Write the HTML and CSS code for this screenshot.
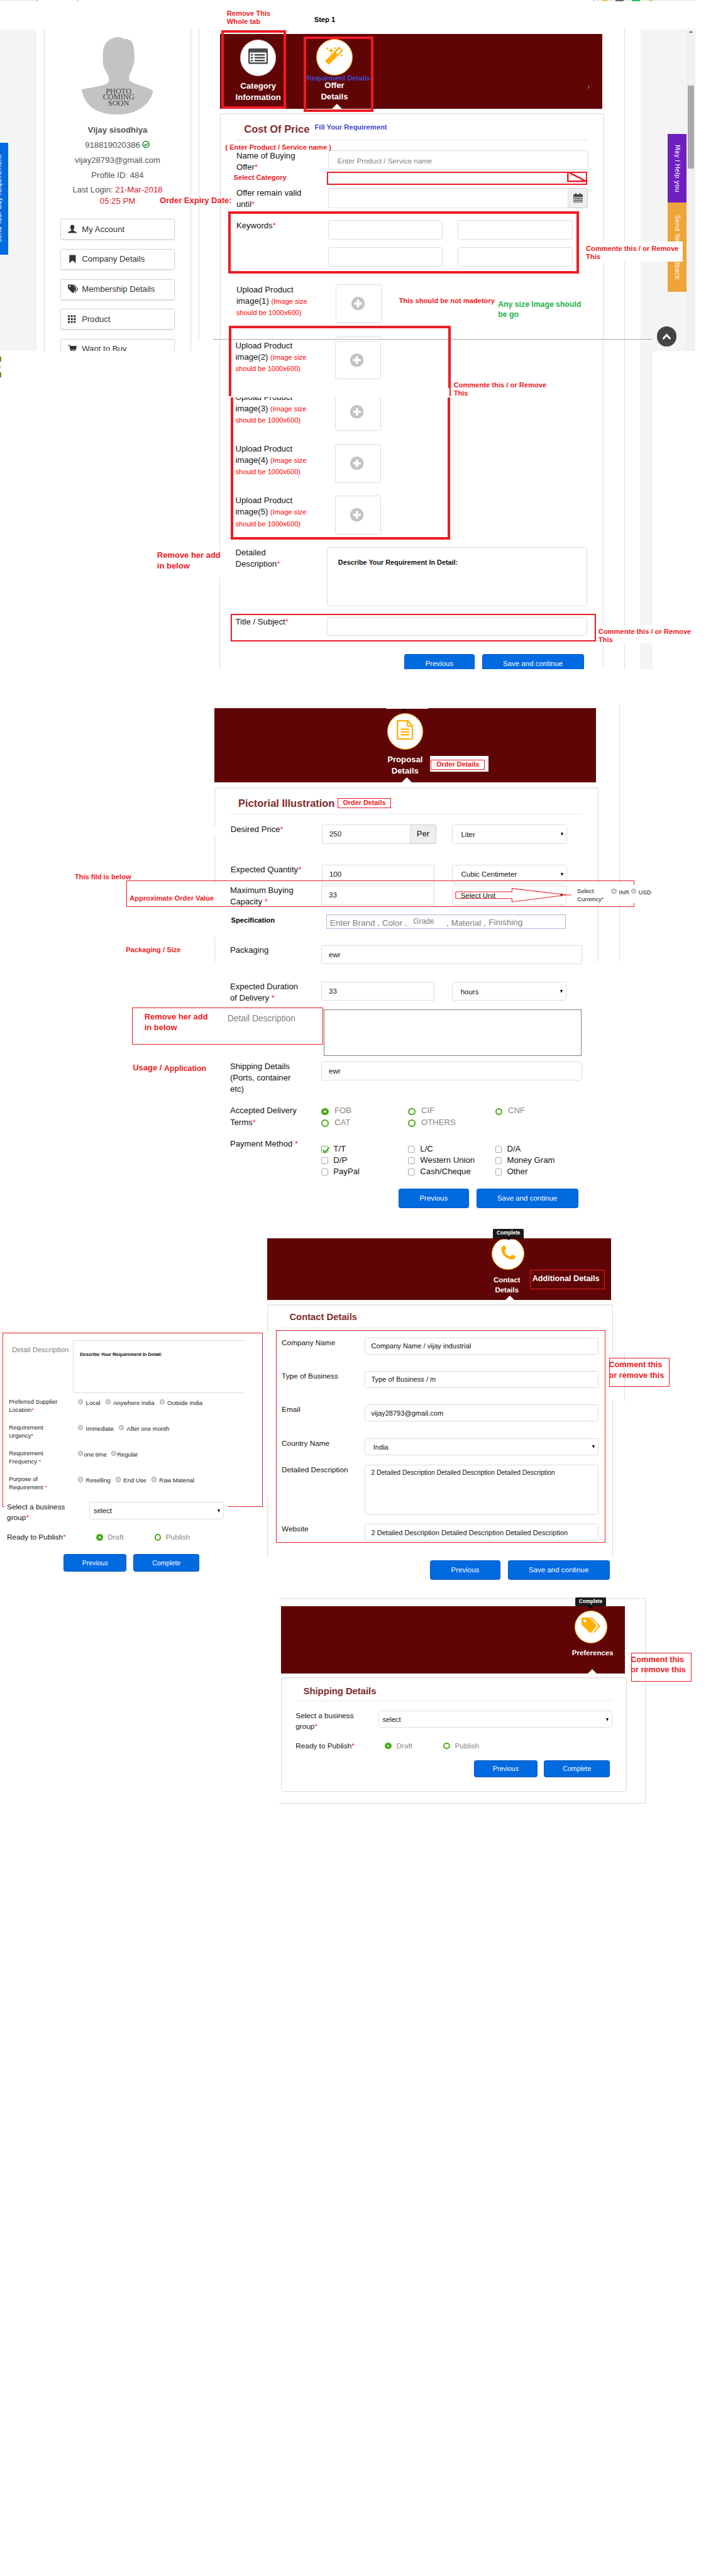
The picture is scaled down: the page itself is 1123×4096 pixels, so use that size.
FILE: index.html
```html
<!DOCTYPE html>
<html lang="en">
<head>
<meta charset="utf-8">
<title>Buying offer form review</title>
<link rel="stylesheet" href="styles.css">
</head>
<body>
<svg width="0" height="0" class="defs">
  <symbol id="i-plus" viewBox="0 0 26 26"><circle cx="13" cy="13" r="13" fill="#c4c2c2"/><path d="M10.8 5.5h4.4v5.3h5.3v4.4h-5.3v5.3h-4.4v-5.3H5.500v-4.400h5.300z" fill="#fff"/></symbol>
  <symbol id="i-tags" viewBox="0 0 36 30"><path d="M2 0h11q2 0 3.500 1.500L28 14q2 2 0 4L19 29q-2 1.500-3.500 0L1.500 15Q0 13.500 0 12V2q0-2 2-2zM6.500 4a2.700 2.700 0 1 0 .1 0z" fill="currentColor" fill-rule="evenodd"/><path d="M16 0h3q1.500 0 3 1.500L35 15q1.500 1.500 0 3.500L25.500 29q-1.500 1.300-3 0l9-11q1.700-2 0-4z" fill="currentColor"/></symbol>
</svg>
<main class="board">

  <!-- browser chrome remains -->
  <div class="strip strip-left"></div>
  <div class="strip strip-right"><i></i><i></i><i></i><i></i></div>
  <div class="tick"></div>

  <!-- first screen -->
  <section class="screen">
    <div class="gutter"></div>
    <aside class="profile">
      <div class="photo">
        <svg viewBox="0 0 138 150"><path d="M71 0C55 0 42 11 41 30v20c1 9 4 12 6 17 4 9 7 10 5 20-6 7-24 9-52 14 3 20 16 49 70 49 44 0 66-28 68-46-10-8-36-12-46-20-1-8 1-14 4-18 3-10 6-14 6-26 0-14-1-24-5-31C90 3 84 2 82 4 79 1 75 0 71 0z" fill="#c3c3c3"/></svg>
        <div class="soon">PHOTO<br>COMING<br>SOON</div>
      </div>
      <p class="name">Vijay sisodhiya</p>
      <p>918819020386 <svg class="ok" viewBox="0 0 16 16"><circle cx="8" cy="8" r="6.700" fill="none" stroke="#1e8e2a" stroke-width="2"/><path d="M4.500 8l2.700 2.800L11.800 6" fill="none" stroke="#1e8e2a" stroke-width="2.200"/></svg></p>
      <p>vijay28793@gmail.com</p>
      <p>Profile ID: 484</p>
      <p>Last Login: <span class="date">21-Mar-2018<br>05:25 PM</span></p>
      <nav class="menu">
        <a><svg viewBox="0 0 18 17"><path d="M9 0c3 0 4.300 2 4.200 5-.1 2.500-1.200 4-2 5v2l6 2.500q.8.500.8 2.500H0q0-2 .8-2.500l6-2.500v-2c-.8-1-1.900-2.500-2-5C4.700 2 6 0 9 0z" fill="#333"/></svg>My Account</a>
        <a><svg viewBox="0 0 18 17"><path d="M3 0h13v17l-6.500-6L3 17z" fill="#333"/></svg>Company Details</a>
        <a><svg class="wide" viewBox="0 0 36 30" color="#333"><use href="#i-tags"/></svg>Membership Details</a>
        <a><svg viewBox="0 0 18 17"><path d="M0 1h4v4H0zM6 1h4v4H6zM12 1h4v4h-4zM0 7h4v4H0zM6 7h4v4H6zM12 7h4v4h-4zM0 13h4v4H0zM6 13h4v4H6zM12 13h4v4h-4z" fill="#333"/></svg>Product</a>
        <a><svg viewBox="0 0 18 17"><path d="M0 0h4l1 2h13l-1.500 8H6.500l.5 1.500h9V13H5.500L3 1.500H0zM6 14h3v3H6zM13 14h3v3h-3z" fill="#333"/></svg>Want to Buy</a>
      </nav>
    </aside>
    <div class="main">
      <header class="steps">
        <div class="step s-cat">
          <span class="disc grey"><svg width="38" height="30" viewBox="0 0 38 30"><path d="M3 0h32q3 0 3 3v24q0 3-3 3H3q-3 0-3-3V3q0-3 3-3zm0 8v19h32V8z" fill="#4b4b4d" fill-rule="evenodd"/><path d="M5 11h4v3H5zm7 0h20v3H12zM5 16.500h4v3H5zm7 0h20v3H12zM5 22h4v3H5zm7 0h20v3H12z" fill="#4b4b4d"/></svg></span>
          Category<br>Information
        </div>
        <div class="step s-offer">
          <span class="disc"><svg width="36" height="36" viewBox="0 0 36 36"><path d="M26.500 1q1-1 2 0l5.500 6q1 1 0 2L8 34.500q-1 1-2 0L1 29q-1-1 0-2zM28 4l-7 7.500 3.500 3.500 7-7z" fill="#ffae00" fill-rule="evenodd"/><path d="M12 2l1.500 4.500L18 8l-4.500 1.500L12 14l-1.500-4.500L6 8l4.500-1.500zM4.500 1l.8 2 2 .8-2 .8-.8 2-.8-2-2-.8 2-.8zM19 .5l.8 2 2 .8-2 .8-.8 2-.8-2-2-.8 2-.8zM32.500 14.500l.8 2 2 .8-2 .8-.8 2-.8-2-2-.8 2-.8z" fill="#ffae00"/></svg></span>
          Offer<br>Details
        </div>
        <i class="point"></i>
      </header>
      <div class="panel">
        <h2>Cost Of Price</h2>
        <hr>
        <div class="row buying"><label>Name of Buying<br>Offer<b>*</b></label><div class="field ph">Enter Product / Service name</div></div>
        <div class="row valid"><label>Offer remain valid<br>until<b>*</b></label><div class="group"><div class="field"></div><div class="addon"><svg width="18" height="19" viewBox="0 0 18 19"><path d="M1 3h16v15H1zM1 7h16M1 10.500h16M1 14.200h16M5 7v11M9 7v11M13 7v11" fill="none" stroke="#444" stroke-width="1.200"/><path d="M0 3h18v4H0zM3.500 0h2.500v4H3.500zM12 0h2.500v4H12z" fill="#444"/></svg></div></div></div>
        <div class="row words"><label>Keywords<b>*</b></label><div class="four"><div class="field"></div><div class="field"></div><div class="field"></div><div class="field"></div></div></div>
        <div class="row up first"><label>Upload Product<br>image(1) <em>(Image size<br>should be 1000x600)</em></label><div class="drop"><svg width="26" height="26"><use href="#i-plus"/></svg></div></div>
        <div class="row up second"><label></label><div class="drop"></div></div>
      </div>
    </div>
    <div class="right-gutter"></div>
    <div class="scroll"><i></i><b></b></div>
  </section>

  <div class="tab blue"><span>Send Your Buy Requirement</span></div>
  <div class="tab purple"><span>May I Help you</span></div>
  <div class="tab orange"><span>Send Your Feedback</span></div>
  <div class="to-top"><svg width="18" height="13" viewBox="0 0 18 13"><path d="M2 11l7-8 7 8" fill="none" stroke="#fff" stroke-width="3.600"/></svg></div>
  <div class="leaf leaf-a"></div><div class="leaf leaf-b"></div><div class="leaf leaf-c"></div>
  <div class="spark"></div>

  <!-- continuation of the first screen -->
  <section class="cont upper">
    <div class="form">
      <div class="row up"><label>Upload Product<br>image(2) <em>(Image size<br>should be 1000x600)</em></label><div class="drop"><svg width="26" height="26"><use href="#i-plus"/></svg></div></div>
    </div>
    <div class="edge"></div><div class="band"></div>
  </section>
  <section class="cont lower">
    <div class="form">
      <div class="row up cut"><label>Upload Product<br>image(3) <em>(Image size<br>should be 1000x600)</em></label><div class="drop"><svg width="26" height="26"><use href="#i-plus"/></svg></div></div>
      <div class="row up"><label>Upload Product<br>image(4) <em>(Image size<br>should be 1000x600)</em></label><div class="drop"><svg width="26" height="26"><use href="#i-plus"/></svg></div></div>
      <div class="row up"><label>Upload Product<br>image(5) <em>(Image size<br>should be 1000x600)</em></label><div class="drop"><svg width="26" height="26"><use href="#i-plus"/></svg></div></div>
      <div class="row detail"><label>Detailed<br>Description<b>*</b></label><div class="field area"><strong>Describe Your Requirement In Detail:</strong></div></div>
      <div class="row subject"><label>Title / Subject<b>*</b></label><div class="field"></div></div>
      <div class="actions"><a class="btn prev">Previous</a><a class="btn save">Save and continue</a></div>
    </div>
    <div class="edge"></div><div class="band"></div>
  </section>

  <div class="box b-cat"></div>
  <div class="box b-offer"></div>
  <div class="box b-select"><svg width="39" height="20" viewBox="0 0 39 20"><path d="M1.500 0v18.500H39M3 1l33 17" fill="none" stroke="#ed1c24" stroke-width="3"/></svg></div>
  <div class="box b-words"></div>
  <div class="box b-img-top"></div>
  <div class="box b-img-mid"></div>
  <div class="box b-img-low"></div>
  <div class="box b-subject"></div>
  <div class="note n-tab">Remove This<br>Whole tab</div>
  <div class="note dark n-step">Step 1</div>
  <div class="note ink n-req">Requirment Details</div>
  <div class="note ink n-fill">Fill Your Requirement</div>
  <div class="note n-enter">( Enter Product / Service name )</div>
  <div class="note n-selcat">Select Category</div>
  <div class="note big n-expiry">Order Expiry Date:</div>
  <div class="note patch n-com1">Commente this / or Remove<br>This</div>
  <div class="note n-mand">This should be not madetory</div>
  <div class="note green n-any">Any size Image should<br>be go</div>
  <div class="note n-com2">Commente this / or Remove<br>This</div>
  <div class="note big patch n-her1">Remove her add<br>in below</div>
  <div class="note patch n-com3">Commente this / or Remove<br>This</div>

  <!-- proposal screen -->
  <section class="proposal">
    <header class="steps">
      <div class="step s-prop">
        <span class="disc"><svg width="32" height="38" viewBox="0 0 32 38"><path d="M1.500 1.500h20l9 9.500v25.500h-29zM21 1.500V11.500h9.500M8 17.500h16M8 23h16M8 28.500h16" fill="none" stroke="#ffae00" stroke-width="2.700"/></svg></span>
        Proposal<br>Details
      </div>
      <i class="point"></i>
    </header>
    <div class="panel">
      <h2>Pictorial Illustration</h2>
      <hr>
      <div class="row price"><label>Desired Price<b>*</b></label><div class="group"><div class="field val short">250</div><div class="addon">Per</div><div class="field sel unit">Liter</div></div></div>
      <div class="row qty"><label>Expected Quantity<b>*</b></label><div class="group"><div class="field val sq num">100</div><div class="field sel">Cubic Centimeter</div></div></div>
      <div class="row cap"><label>Maximum Buying<br>Capacity <b>*</b></label><div class="group"><div class="field val sq num">33</div><div class="field sel">Select Unit</div></div></div>
      <div class="row spec"><label class="note dark">Specification</label><div class="hint"><span>Enter Brand , Color ,</span><span class="grade">Grade</span><span class="mat">, Material ,</span><span class="fin">Finishing</span></div></div>
      <div class="row pack"><label>Packaging</label><div class="field val">ewr</div></div>
      <div class="row dur"><label>Expected Duration<br>of Delivery <b>*</b></label><div class="group"><div class="field val sq num">33</div><div class="field sel">hours</div></div></div>
      <div class="row desc"><label>Detail Description</label><div class="plain"></div></div>
      <div class="row ship"><label>Shipping Details<br>(Ports, container<br>etc)</label><div class="field val">ewr</div></div>
      <div class="row terms"><label>Accepted Delivery<br>Terms<b>*</b></label>
        <div class="opts grey"><span><i class="dot on"></i>FOB</span><span><i class="dot"></i>CIF</span><span><i class="dot"></i>CNF</span><span><i class="dot"></i>CAT</span><span><i class="dot"></i>OTHERS</span></div></div>
      <div class="row pay"><label>Payment Method <b>*</b></label>
        <div class="opts"><span><i class="chk on"><svg width="16" height="16" viewBox="0 0 16 16"><path d="M2 7l4 4.500L14 2" fill="none" stroke="#3fa321" stroke-width="2.600"/></svg></i>T/T</span><span><i class="chk"></i>L/C</span><span><i class="chk"></i>D/A</span><span><i class="chk"></i>D/P</span><span><i class="chk"></i>Western Union</span><span><i class="chk"></i>Money Gram</span><span><i class="chk"></i>PayPal</span><span><i class="chk"></i>Cash/Cheque</span><span><i class="chk"></i>Other</span></div></div>
      <div class="actions"><a class="btn prev">Previous</a><a class="btn save">Save and continue</a></div>
    </div>
  </section>
  <div class="vline v-prop"></div><div class="vline v-cap"></div>
  <div class="blank k1"></div><div class="blank k2"></div>
  <div class="notch"><i></i></div>
  <div class="thin r-cap"></div>
  <div class="currency"><label>Select<br>Currency<b>*</b></label><span><i class="rad"></i>INR</span><span><i class="rad"></i>USD</span></div>
  <svg class="arrow" width="226" height="30" viewBox="0 0 226 30"><path d="M1 8.500h109V2L216 14.500h9M216 14.500L110 28V21.500H1V8.500" fill="none" stroke="#ed1c24" stroke-width="1.300"/></svg>
  <div class="thin r-her"></div>
  <div class="tag tag-head"><span>Order Details</span></div>
  <div class="tag tag-title"><span>Order Details</span></div>
  <div class="note n-fild">This fild is below</div>
  <div class="note n-approx">Approximate Order Value</div>
  <div class="note n-pack">Packaging / Size</div>
  <div class="note big n-her2">Remove her add<br>in below</div>
  <div class="note big n-usage">Usage / <span>Application</span></div>

  <!-- contact screen -->
  <section class="contact">
    <header class="steps">
      <div class="step s-con">
        <span class="disc"><svg width="28" height="28" viewBox="0 0 28 28"><path d="M2 3Q4 0 7 .5q2 1 2.500 6.500 0 2-3 3.500 1 4 4.500 7.500 4 3.500 7.500 4 1.500-3 3.500-3 4 0 5.500 2 1 2-1.500 5-3 2.500-7 1.500C9 25 2 18 .5 9 .3 5 1 4 2 3z" fill="#ffae00"/></svg></span>
        Contact<br>Details
      </div>
      <i class="point"></i>
    </header>
    <div class="panel">
      <h2>Contact Details</h2>
      <hr>
      <div class="row c1"><label>Company Name</label><div class="field val">Company Name / vijay industrial</div></div>
      <div class="row c2"><label>Type of Business</label><div class="field val">Type of Business / m</div></div>
      <div class="row c2"><label>Email</label><div class="field val">vijay28793@gmail.com</div></div>
      <div class="row c2"><label>Country Name</label><div class="field sel">India</div></div>
      <div class="row c3"><label>Detailed Description</label><div class="field val">2 Detailed Description Detailed Description Detailed Description</div></div>
      <div class="row c4"><label>Website</label><div class="field val">2 Detailed Description Detailed Description Detailed Description</div></div>
      <div class="actions"><a class="btn prev">Previous</a><a class="btn save">Save and continue</a></div>
    </div>
  </section>
  <div class="tip t-con">Complete</div>
  <div class="blank k3"></div><div class="blank k4"></div>
  <div class="vline v-con"></div>
  <div class="thin r-con"></div>
  <div class="thin r-com1"></div>
  <div class="thin r-add">Additional Details</div>
  <div class="note big n-comm1">Comment this<br>or remove this</div>

  <!-- additional requirement block -->
  <section class="extra">
    <div class="frame">
      <div class="xdesc"><label>Detail Description</label><div class="field"><strong>Describe Your Requirement In Detail:</strong></div></div>
      <div class="q"><label>Preferred Supplier<br>Location<b>*</b></label><div><span><i class="rad"></i>Local</span><span><i class="rad"></i>Anywhere India</span><span><i class="rad"></i>Outside India</span></div></div>
      <div class="q"><label>Requirement<br>Urgency<b>*</b></label><div><span><i class="rad"></i>Immediate</span><span><i class="rad"></i>After one month</span></div></div>
      <div class="q tight"><label>Requirement<br>Frequency <b>*</b></label><div><span><i class="rad"></i>one time</span><span><i class="rad"></i>Regular</span></div></div>
      <div class="q"><label>Purpose of<br>Requirement <b>*</b></label><div><span><i class="rad"></i>Reselling</span><span><i class="rad"></i>End Use</span><span><i class="rad"></i>Raw Material</span></div></div>
    </div>
    <div class="groupbox">
      <div class="row g1"><label>Select a business<br>group<b>*</b></label><div class="field sel">select</div></div>
      <div class="row g2"><label>Ready to Publish<b>*</b></label><div class="pub"><span><i class="dot on"></i>Draft</span><span><i class="dot"></i>Publish</span></div></div>
      <div class="actions"><a class="btn prev">Previous</a><a class="btn save">Complete</a></div>
    </div>
  </section>

  <!-- preferences screen -->
  <section class="prefs">
    <header class="steps">
      <div class="step s-pref">
        <span class="disc"><svg width="36" height="30" viewBox="0 0 36 30" color="#ffae00"><use href="#i-tags"/></svg></span>
        Preferences
      </div>
      <i class="point"></i>
    </header>
    <div class="panel">
      <h2>Shipping Details</h2>
      <hr>
      <div class="row g1"><label>Select a business<br>group<b>*</b></label><div class="field sel">select</div></div>
      <div class="row g2"><label>Ready to Publish<b>*</b></label><div class="pub"><span><i class="dot on"></i>Draft</span><span><i class="dot"></i>Publish</span></div></div>
      <div class="actions"><a class="btn prev">Previous</a><a class="btn save">Complete</a></div>
    </div>
  </section>
  <div class="tip t-pref">Complete</div>
  <div class="thin r-com2"></div>
  <div class="note big n-comm2">Comment this<br>or remove this</div>
</main>
</body>
</html>
```
FILE: styles.css
```css
* { box-sizing: border-box; }
html, body { margin: 0; padding: 0; background: #fff; overflow: hidden; }
body { height: 4096px; font-family: "Liberation Sans", Arial, sans-serif; }
.defs { position: absolute; }
.board { position: relative; zoom: 0.8219; width: 1366px; height: 4983px; overflow: hidden; font-size: 16px; line-height: 22px; color: #111; }
p, h2, hr { margin: 0; }
svg { display: block; }

/* shared pieces */
.steps { position: relative; background: #600505; height: 144px; }
.step { position: absolute; color: #fff; font-weight: bold; text-align: center; }
.disc { display: flex; align-items: center; justify-content: center; width: 70px; height: 70px; margin: 0 auto 9px; background: #fff; border: 2px solid #ffae00; border-radius: 50%; }
.disc.grey { border-color: #ccc; }
.disc svg { margin-bottom: 6px; }
.point { position: absolute; bottom: 0; border: 10px solid transparent; border-top: 0; border-bottom-color: #fff; }
.panel { border: 1px solid #ddd; border-radius: 4px 4px 0 0; border-bottom: 0; box-shadow: inset 0 1px 2px rgba(0,0,0,.08); }
.panel h2 { font-size: 20px; line-height: 22px; color: #802b2b; margin-left: 15px; white-space: nowrap; }
.panel hr { border: 0; border-top: 1px solid #e9e9e9; height: 1px; }
.row { display: grid; }
.row label b, .currency b, .q b { color: #ed3030; font-weight: normal; }
.row label { margin-top: -1px; white-space: nowrap; height: 0; }
.row em { color: #f00; font-style: normal; font-size: 13.5px; }
.field { border: 1px solid #ddd; border-radius: 4px; background: #fff; height: 37px; font-size: 14px; display: flex; align-items: center; color: #111; white-space: nowrap; }
.field.ph { color: #848484; padding: 4px 0 0 17px; }
.field.val { padding-left: 13px; }
.field.sq { border-radius: 0; }
.field.sel { padding: 1px 6px 0 16px; justify-content: space-between; }
.field.sel::after { content: ""; border: 3.5px solid transparent; border-top: 7px solid #000; border-bottom: 0; }
.group { display: flex; }
.addon { border: 1px solid #ccc; border-left-color: #ddd; border-radius: 0 4px 4px 0; background: #eee; display: flex; align-items: center; justify-content: center; }
.drop { width: 89px; height: 75px; border: 1px solid #ddd; border-radius: 4px; margin-left: 15px; display: flex; align-items: center; justify-content: center; padding-right: 3px; }
.actions { display: flex; gap: 14px; justify-content: flex-end; }
.btn { background: #006ae1; border: 1px solid #0058bc; border-radius: 4px; color: #fff; font-size: 14px; height: 38px; display: flex; align-items: center; justify-content: center; }
.btn.prev { width: 137px; }
.btn.save { width: 197px; }
.dot { width: 14px; height: 14px; border: 3px solid #4caa1c; border-radius: 50%; flex: none; }
.dot.on { border-width: 5.500px; }
.rad { width: 10px; height: 10px; border: 1px solid #999; border-radius: 50%; background: #ddd; flex: none; }

/* red pen */
.note { position: absolute; font-weight: bold; font-size: 13.6px; line-height: 16px; color: #ed1c24; white-space: nowrap; }
.note.dark { color: #000; }
.note.ink { color: #3f48cc; }
.note.big { font-size: 15.8px; line-height: 20px; }
.note.green { color: #22b14c; font-size: 14.9px; line-height: 20px; }
.note.patch { background: #fff; }
.box { position: absolute; border: 5px solid #ed1c24; }
.thin { position: absolute; border: 1px solid #ed1c24; }
.vline { position: absolute; width: 1px; background: #ddd; }
.blank { position: absolute; background: #fff; }

/* chrome remains */
.strip { position: absolute; top: 0; height: 2px; background: #f0f0f0; }
.strip-left { left: 0; width: 73px; border-right: 1px solid #777; }
.strip-right { left: 1149px; width: 197px; border-left: 1px solid #999; display: flex; gap: 16px; padding-left: 15px; }
.strip-right i { width: 16px; height: 2px; background: #666; }
.strip-right i:first-child { width: 10px; background: #e6cf5c; }
.strip-right i:nth-child(3) { background: #24c26c; }
.strip-right i:last-child { width: 8px; background: #b9e27c; }
.tick { position: absolute; left: 150px; top: 0; width: 1px; height: 2px; background: #999; }

/* first screen */
.screen { position: absolute; left: 0; top: 56px; width: 1346px; height: 623px; overflow: hidden; display: flex; }
.gutter { width: 70px; background: #f4f4f4; flex: none; }
.profile { width: 285px; margin-left: 15px; border: 1px solid #d8d8d8; border-width: 0 1px; flex: none; color: #555; text-align: center; }
.photo { position: relative; width: 138px; height: 150px; margin: 16px auto 19px; }
.soon { position: absolute; left: 0; top: 99px; width: 142px; font: 15px/12px "Liberation Serif", serif; color: #444; }
.profile p { margin-bottom: 7px; }
.profile .name { font-weight: bold; }
.profile .date { color: #d2232a; }
.ok { display: inline-block; width: 15px; height: 16px; vertical-align: -1px; }
.menu { padding: 16px 30px 0; }
.menu a { display: flex; align-items: center; height: 40px; margin-bottom: 18px; border: 1px solid #d5d5d5; border-radius: 3px; box-shadow: 0 1px 2px rgba(0,0,0,.12); padding-left: 14px; color: #333; }
.menu svg { width: 17px; height: 17px; margin-right: 10px; margin-bottom: 2px; }
.menu svg.wide { width: 20px; margin-right: 7px; }
.main { width: 825px; margin-left: 15px; border: 1px solid #ddd; border-width: 0 1px; height: 599px; flex: none; padding: 10px 40px 0; overflow: hidden; }
.main .steps { width: 739px; }
.main .panel { width: 743px; height: 440px; margin-top: 9px; padding: 18px 0 0 30px; }
.main hr { width: 681px; margin-top: 10px; }
.main .row, .cont .row { grid-template-columns: 177.5px 503.500px; }
.s-cat { left: 24px; top: 11px; width: 99px; }
.s-offer { left: 171px; top: 10px; width: 100px; }
.s-offer .disc, .s-cat .disc { margin-bottom: 9px; }
.main .point { left: 216px; }
.row.buying { margin-top: 20px; height: 44px; }
.row.valid { margin-top: 28px; height: 39px; }
.valid .field { width: 464px; height: 39px; border-radius: 4px 0 0 4px; border-right: 0; }
.valid .addon { width: 39px; height: 39px; }
.row.words { margin-top: 24px; height: 89px; }
.four { display: grid; grid-template-columns: 222px 222px; gap: 15px 29px; align-content: start; }
.row.first { margin-top: 35px; }
.row.second { margin-top: 25px; }
.right-gutter { width: 89px; background: #f4f4f4; flex: none; margin-left: 30px; }
.scroll { width: 17px; background: #f0f0f0; flex: none; display: flex; flex-direction: column; align-items: center; padding-top: 4px; }
.scroll i { border: 4px solid transparent; border-top: 0; border-bottom: 4px solid #555; }
.scroll b { width: 12px; height: 160px; margin-top: 102px; background: #a8a8a8; }

.tab { position: absolute; writing-mode: vertical-rl; font: 12.400px/15px "DejaVu Sans", Verdana, sans-serif; color: #fff; display: flex; align-items: center; justify-content: center; white-space: nowrap; overflow: hidden; }
.tab.blue { left: 0; top: 276px; width: 16px; height: 217px; background: #006ae1; }
.tab.blue span { transform: rotate(180deg); margin-left: -18px; font-size: 12.200px; }
.tab.purple { left: 1292px; top: 259px; width: 37px; height: 133px; background: #6f1fc0; }
.tab.orange { left: 1292px; top: 392px; width: 37px; height: 172px; background: #eda438; }
.to-top { position: absolute; z-index: 2; left: 1271px; top: 632px; width: 38px; height: 38px; border-radius: 50%; background: #444; display: flex; align-items: center; justify-content: center; }
.leaf { position: absolute; left: 0; width: 2px; background: #6b8e23; }
.leaf-a { top: 690px; height: 9px; }
.leaf-b { top: 709px; height: 1px; }
.leaf-c { top: 720px; height: 10px; }
.spark { position: absolute; left: 1139px; top: 165px; width: 1px; height: 6px; background: #e0912c; }

/* continuation */
.cont { position: absolute; background: #fff; width: 851px; left: 412px; padding-left: 13px; overflow: hidden; display: grid; grid-template-columns: 743px 41px 30px 24px; }
.cont.upper { top: 656px; height: 113px; border-top: 1px solid #aaa; }
.cont.lower { top: 769px; height: 525px; }
.cont .form { border: 1px solid #ddd; border-width: 0 1px; padding: 2px 30px 0 29.5px; height: 700px; }
.cont .edge { border-right: 1px solid #ddd; }
.cont .band { grid-column: 4; background: #f4f4f4; }
.cont .row.up { height: 75px; margin-bottom: 25px; }
.cont .row.cut { margin-top: -12px; }
.cont .field { width: 503.500px; }
.cont .field.area { height: 114px; align-items: flex-start; padding: 20px 0 0 20px; font-size: 13.2px; line-height: 16px; }
.cont .row.subject { margin-top: 20px; height: 37px; }
.cont .actions { margin: 35px 7px 0 0; }

.b-cat { left: 428px; top: 58px; width: 126px; height: 153px; }
.b-offer { left: 588px; top: 71px; width: 135px; height: 146px; }
.b-select { left: 633px; top: 332px; width: 504px; height: 26px; border-width: 3px; background: #fff; display: flex; justify-content: flex-end; }
.b-select svg { margin-top: -2px; margin-right: -2px; }
.b-words { left: 442px; top: 409px; width: 678px; height: 120px; }
.b-img-top { left: 443px; top: 630px; width: 429px; height: 121px; border-bottom: 0; }
.b-img-mid { left: 443px; top: 751px; width: 429px; height: 15px; border-width: 0 3px 0 5px; }
.b-img-low { left: 446px; top: 769px; width: 425px; height: 275px; border-top: 0; }
.b-subject { left: 447px; top: 1188px; width: 707px; height: 53px; border-width: 3px; }
.n-tab { left: 439px; top: 18px; }
.n-step { left: 608px; top: 30px; }
.n-req { left: 593px; top: 144px; }
.n-fill { left: 609px; top: 238px; }
.n-enter { left: 436px; top: 277px; }
.n-selcat { left: 452px; top: 336px; }
.n-expiry { left: 309px; top: 378px; }
.n-com1 { left: 1130px; top: 467px; width: 191px; height: 39px; padding: 6px 0 0 4px; }
.n-mand { left: 772px; top: 574px; }
.n-any { left: 964px; top: 579px; }
.n-com2 { left: 878px; top: 737px; }
.n-her1 { left: 302px; top: 1064px; width: 126px; height: 53px; padding: 1px 0 0 2px; }
.n-com3 { left: 1156px; top: 1210px; width: 190px; height: 35px; padding: 4px 0 0 2px; }

/* proposal */
.proposal { position: absolute; left: 415px; top: 1370px; width: 743px; }
.proposal .steps { width: 739px; }
.s-prop { left: 319px; top: 10px; width: 100px; }
.proposal .point { left: 363px; }
.proposal .panel { margin-top: 9px; height: 337px; padding: 18px 30px 0 30px; }
.proposal hr { margin-top: 10px; }
.proposal .row { grid-template-columns: 177px 504px; }
.proposal .group { gap: 34px; }
.proposal .field.num { width: 218px; }
.proposal .field.sel { width: 222px; }
.row.price { margin-top: 20px; height: 37px; }
.price .group { gap: 0; }
.price .field.short { width: 170px; border-radius: 4px 0 0 4px; border-right: 0; }
.price .addon { width: 51px; height: 37px; }
.price .field.unit { margin-left: 31px; }
.row.qty { margin-top: 40px; height: 37px; }
.row.cap { margin: 4px 0 0 -1px; height: 37px; }
.row.spec { margin-top: 19px; height: 27px; }
.row.spec label { position: static; margin: 3px 0 0 1px; }
.hint { width: 464px; height: 28px; margin-left: 8px; border: 1px solid #b9b0dd; color: #7f7f7f; font-size: 16.4px; line-height: 31px; display: flex; padding-left: 6px; white-space: nowrap; }
.hint .grade { width: 64px; margin-left: 12px; font-size: 14.6px; line-height: 26px; }
.hint .mat { width: 82px; }
.hint .fin { line-height: 29px; }
.row.pack { margin: 32px 0 0 -1px; height: 37px; }
.row.dur { margin: 34px 0 0 -1px; height: 53px; }
.row.desc { height: 90px; }
.row.desc label { margin: 8px 0 0 -6px; color: #7f7f7f; font-size: 16.8px; }
.plain { width: 499px; height: 90px; margin-left: 3px; border: 1px solid #7f7f7f; background: #fff; }
.row.ship { margin: 11px 0 0 -1px; height: 86px; }
.row.terms { height: 64px; margin-left: -1px; }
.row.pay { height: 96px; margin-left: -1px; }
.opts { display: grid; grid-template-columns: 168px 168px 168px; grid-auto-rows: 22px; margin-top: -1px; }
.opts span { display: flex; align-items: center; gap: 11px; white-space: nowrap; }
.opts.grey { color: #888; }
.opts .dot { margin-top: 3px; }
.pay .opts { margin-top: 9px; }
.pay .opts span { gap: 10px; }
.chk { width: 13px; height: 13px; border: 1px solid #a9a9a9; border-radius: 2px; flex: none; }
.chk.on { border-color: #6db34c; }
.proposal .actions { margin-right: 8px; margin-left: -8px; }
.v-prop { left: 1198px; top: 1362px; height: 498px; }
.v-cap { left: 401px; top: 1725px; height: 25px; }
.k1 { left: 413px; top: 1597px; width: 5px; height: 18px; }
.k2 { left: 413px; top: 1711px; width: 5px; height: 101px; }
.notch { position: absolute; left: 747px; top: 1369px; width: 81px; height: 2px; background: #fff; }
.notch i { position: absolute; left: 31px; top: 2px; border: 6px solid transparent; border-top: 6px solid #000; border-bottom: 0; }
.r-cap { left: 244px; top: 1703px; width: 984px; height: 51px; }
.currency { position: absolute; left: 1103px; top: 1712px; width: 160px; height: 35px; background: #fff; font-size: 11.600px; line-height: 16px; color: #222; display: flex; padding: 3px 0 0 14px; gap: 0; }
.currency label { width: 66px; }
.currency span { display: flex; gap: 5px; width: 38px; height: 22px; align-items: center; flex: none; }
.currency .rad { margin-top: -3px; }
.arrow { position: absolute; left: 881px; top: 1716.500px; }
.r-her { left: 256px; top: 1949px; width: 369px; height: 72px; }
.tag { position: absolute; font-weight: bold; font-size: 13.2px; line-height: 17px; color: #ed1c24; white-space: nowrap; }
.tag span { display: block; width: 104px; height: 19px; border: 1px solid #ed1c24; text-align: center; }
.tag-head { left: 832px; top: 1463px; width: 113px; height: 30px; background: #fff; padding: 7px 2px; }
.tag-title { left: 653px; top: 1544px; }
.n-fild { left: 144.500px; top: 1689px; }
.n-approx { left: 251px; top: 1730px; }
.n-pack { left: 243.500px; top: 1830px; }
.n-her2 { left: 279.500px; top: 1958px; }
.n-usage { left: 257px; top: 2056px; }
.n-usage span { font-size: 15px; position: relative; top: 1px; }

/* contact and preferences share a smaller scale */
.contact, .prefs, .groupbox { font-size: 14.350px; line-height: 20px; }
.contact .field, .prefs .field, .groupbox .field { height: 33px; font-size: 13.500px; }
.contact .disc, .prefs .disc { width: 63px; height: 63px; }
.contact .panel h2, .prefs .panel h2 { font-size: 18px; line-height: 20px; }
.contact .row, .prefs .row { grid-template-columns: 160px 453px; }
.contact label, .prefs label, .groupbox label { margin-top: 0; }
.contact { position: absolute; left: 517px; top: 2396px; width: 669px; }
.contact .steps { width: 666px; height: 119px; }
.contact .step, .prefs .step { font-size: 14px; line-height: 20px; }
.s-con { left: 424px; top: -2px; width: 80px; }
.contact .s-con .disc { margin: 0 0 9px 11px; }
.contact .point { left: 461px; border-width: 0 9px 9px; }
.contact .panel { margin-top: 8px; height: 490px; padding: 14px 0 0 27px; }
.contact hr, .prefs hr { margin-top: 10px; width: 613px; }
.row.c1 { margin-top: 18px; height: 33px; }
.row.c2 { margin-top: 32px; height: 33px; }
.row.c3 { margin-top: 18px; height: 98px; }
.contact .c3 .field { height: 98px; font-size: 12.600px; align-items: flex-start; padding-top: 5px; line-height: 20px; }
.row.c4 { margin-top: 17px; height: 33px; }
.contact .actions { margin: 37px 5px 0 0; }
.contact .field.val { padding-left: 12px; }
.tip { position: absolute; width: 60px; height: 17px; background: #1a1a1a; border-radius: 2px; color: #fff; font-weight: bold; font-size: 10px; line-height: 16px; text-align: center; }
.tip::after { content: ""; position: absolute; left: 25px; top: 17px; border: 5px solid transparent; border-top-color: #000; border-bottom: 0; }
.t-con { left: 954px; top: 2377px; box-shadow: 0 3px 0 #3a0303; }
.k3 { left: 515px; top: 2580px; width: 5px; height: 316px; }
.k4 { left: 1183px; top: 2617px; width: 5px; height: 92px; }
.v-con { left: 1208px; top: 2617px; height: 92px; }
.r-con { left: 534px; top: 2573px; width: 638px; height: 412px; }
.r-com1 { left: 1179px; top: 2627px; width: 117px; height: 56px; }
.r-add { left: 1026px; top: 2457px; width: 144px; height: 37px; color: #fff; font-weight: bold; font-size: 15.400px; line-height: 34px; padding-left: 3px; white-space: nowrap; }
.n-comm1 { left: 1178.500px; top: 2631px; }
.n-comm1.note, .n-comm2.note { font-size: 15.500px; }

/* additional requirement block */
.extra { position: absolute; left: 5px; top: 2578px; width: 503px; }
.frame { height: 337px; border: 1px solid #ed1c24; padding: 13px 0 0 11px; font-size: 11.600px; line-height: 16px; color: #222; }
.xdesc { display: grid; grid-template-columns: 118px 334px; padding-left: 6px; height: 111px; }
.xdesc label { font-size: 14px; color: #7f7f7f; margin-top: 12px; white-space: nowrap; }
.xdesc { column-gap: 0; }
.xdesc .field { height: 103px; border-right: 0; border-radius: 3px; align-items: flex-start; padding: 19px 0 0 12px; font-size: 9.500px; letter-spacing: -.2px; line-height: 16px; }
.q { display: grid; grid-template-columns: 134px 1fr; height: 50px; white-space: nowrap; }
.q div { display: flex; gap: 10px; height: 22px; align-items: center; }
.q span { display: flex; align-items: center; gap: 5px; }
.q .rad { margin-top: -4px; }
.q.tight span { gap: 1px; }
.q.tight div { gap: 9px; }
.groupbox { position: relative; margin: -17px 0 0 3px; width: 434px; background: #fff; }
.groupbox .row { grid-template-columns: 165px 260px; padding-left: 0; }
.groupbox label { padding-left: 5.500px; }
.groupbox .g1 { padding-top: 8px; height: 66px; }
.groupbox .g1 label { margin-top: 0; }
.groupbox .field.sel, .prefs .field.sel { padding-left: 7px; }
.groupbox .g2 { height: 43px; }
.pub { display: flex; color: #888; height: 20px; padding-left: 13px; }
.pub span { display: flex; align-items: center; gap: 9px; width: 113px; }
.pub .dot { width: 13px; height: 13px; }
.pub .dot.on { border-width: 5px; }
.groupbox .btn, .prefs .btn { height: 33px; font-size: 12.800px; }
.groupbox .prev, .prefs .prev { width: 122px; }
.groupbox .save, .prefs .save { width: 128px; }
.groupbox .actions { margin-right: 56px; gap: 13px; }
.extra .groupbox { margin-top: -17px; }

/* preferences */
.prefs { position: absolute; left: 540px; top: 3092px; width: 710px; height: 398px; border: 1px solid #ddd; border-left: 0; border-radius: 0 4px 4px 0; padding: 14px 0 0 4px; }
.prefs .steps { width: 666px; height: 130px; }
.s-pref { left: 553px; top: 9px; width: 100px; }
.prefs .s-pref .disc { margin: 0 0 9px 15px; }
.prefs .point { left: 594px; border-width: 0 9px 9px; }
.prefs .panel { width: 669px; height: 221px; margin-top: 8px; padding: 15px 0 0 27px; border-bottom: 1px solid #ddd; border-radius: 4px; }
.prefs hr { margin-top: 9px; }
.prefs .g1 { margin-top: 18px; height: 58px; }
.prefs .g2 { height: 38px; }
.prefs .actions { margin-right: 31px; gap: 13px; }
.t-pref { left: 1113px; top: 3091px; }
.r-com2 { left: 1221px; top: 3197px; width: 117px; height: 56px; }
.n-comm2 { left: 1220.500px; top: 3201px; }
```
